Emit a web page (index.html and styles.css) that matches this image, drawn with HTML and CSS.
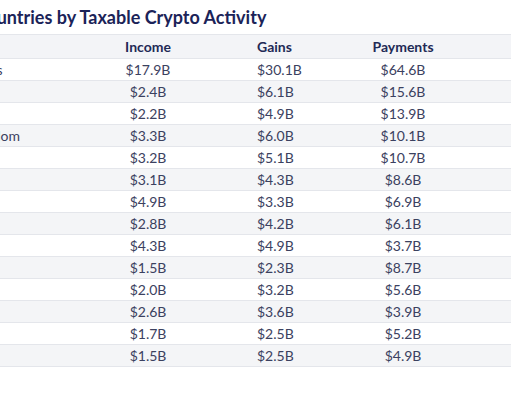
FILE: index.html
```html
<!DOCTYPE html>
<html lang="en">
<head>
  <meta charset="UTF-8" />
  <meta name="viewport" content="width=device-width, initial-scale=1.0"/>
  <title>Taxable Crypto Activity</title>
  <link rel="stylesheet" href="styles.css">
</head>
<body>

<div class="report">
  <h2 class="report-title">Top Countries by Taxable Crypto Activity</h2>

  <table class="crypto-table">
    <colgroup>
      <col class="col-country">
      <col class="col-income">
      <col class="col-gains">
      <col class="col-payments">
      <col class="col-spare">
    </colgroup>
    <thead>
      <tr>
        <th class="country">Country</th>
        <th class="income">Income</th>
        <th class="gains">Gains</th>
        <th class="payments">Payments</th>
        <th></th>
      </tr>
    </thead>
    <tbody>
      <tr><td class="country">United States</td><td class="income">$17.9B</td><td class="gains">$30.1B</td><td class="payments">$64.6B</td><td></td></tr>
      <tr><td class="country">India</td><td class="income">$2.4B</td><td class="gains">$6.1B</td><td class="payments">$15.6B</td><td></td></tr>
      <tr><td class="country">Japan</td><td class="income">$2.2B</td><td class="gains">$4.9B</td><td class="payments">$13.9B</td><td></td></tr>
      <tr><td class="country">United Kingdom</td><td class="income">$3.3B</td><td class="gains">$6.0B</td><td class="payments">$10.1B</td><td></td></tr>
      <tr><td class="country">Germany</td><td class="income">$3.2B</td><td class="gains">$5.1B</td><td class="payments">$10.7B</td><td></td></tr>
      <tr><td class="country">Canada</td><td class="income">$3.1B</td><td class="gains">$4.3B</td><td class="payments">$8.6B</td><td></td></tr>
      <tr><td class="country">Brazil</td><td class="income">$4.9B</td><td class="gains">$3.3B</td><td class="payments">$6.9B</td><td></td></tr>
      <tr><td class="country">France</td><td class="income">$2.8B</td><td class="gains">$4.2B</td><td class="payments">$6.1B</td><td></td></tr>
      <tr><td class="country">Australia</td><td class="income">$4.3B</td><td class="gains">$4.9B</td><td class="payments">$3.7B</td><td></td></tr>
      <tr><td class="country">Turkey</td><td class="income">$1.5B</td><td class="gains">$2.3B</td><td class="payments">$8.7B</td><td></td></tr>
      <tr><td class="country">Russia</td><td class="income">$2.0B</td><td class="gains">$3.2B</td><td class="payments">$5.6B</td><td></td></tr>
      <tr><td class="country">Italy</td><td class="income">$2.6B</td><td class="gains">$3.6B</td><td class="payments">$3.9B</td><td></td></tr>
      <tr><td class="country">Spain</td><td class="income">$1.7B</td><td class="gains">$2.5B</td><td class="payments">$5.2B</td><td></td></tr>
      <tr><td class="country">Vietnam</td><td class="income">$1.5B</td><td class="gains">$2.5B</td><td class="payments">$4.9B</td><td></td></tr>
    </tbody>
  </table>
</div>

</body>
</html>
```

FILE: styles.css
```css
body { margin: 0; font-family: 'Lato', 'Liberation Sans', sans-serif; background: #fff; overflow: hidden; }

/* the view is scrolled a little to the right of the report's left edge */
.report {
  margin-left: -90px;
  width: 601px;
}
.report-title {
  margin: 0;
  padding: 4px 0 0 31px;
  height: 30px;
  font-size: 18px;
  line-height: 26px;
  font-weight: 700;
  color: #1b2358;
}

.crypto-table {
  width: 601px;
  table-layout: fixed;
  border-collapse: collapse;
  font-size: 14px;
  color: #3b4160;
}
.col-country { width: 190px; }
.col-income { width: 96px; }
.col-gains { width: 144px; }
.col-payments { width: 126px; }

.crypto-table th,
.crypto-table td {
  padding: 0;
  white-space: nowrap;
  border-bottom: 1px solid #e4e6eb;
}
.crypto-table thead tr {
  background: #f3f4f7;
  border-top: 1px solid #e4e6eb;
}
.crypto-table th {
  height: 23px;
  font-weight: 700;
  color: #1f2a56;
}
.crypto-table td { height: 21px; }
.crypto-table tbody tr:nth-child(even) { background: #f4f5f7; }

.country { text-align: left; padding-left: 10px !important; }
.income { text-align: center; }
.gains { text-align: left; padding-left: 61px !important; }
.payments { text-align: center; }
.crypto-table th.country { color: transparent; }
```
